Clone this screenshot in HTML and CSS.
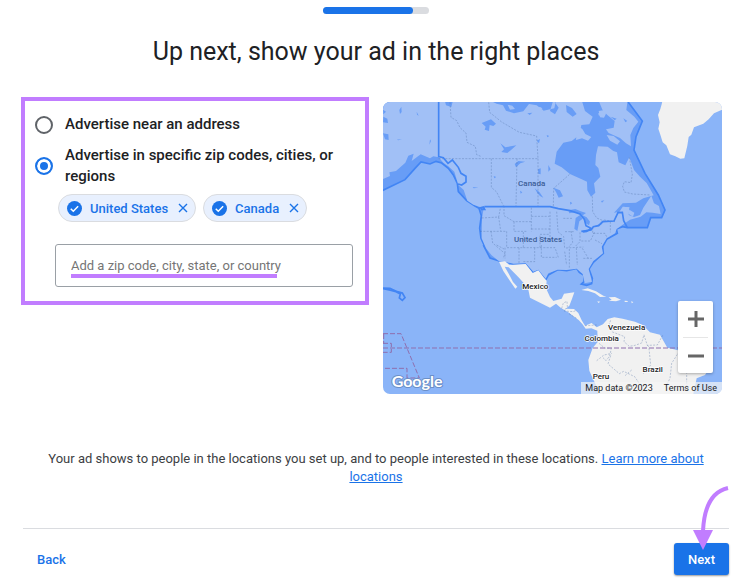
FILE: index.html
```html
<!DOCTYPE html>
<html lang="en">

<head>
    <meta charset="UTF-8">
    <meta name="viewport" content="width=device-width, initial-scale=1.0">
    <title>Choose ad locations</title>
    <link rel="stylesheet" href="styles.css">
</head>

<body>

    <div class="header">
        <div class="progress">
            <div class="progress-bar" style="width: 85%"></div>
        </div>
        <h1>Up next, show your ad in the right places</h1>
    </div>

    <div class="content">
        <form class="location-box">
            <label class="option">
                <input type="radio" name="target" value="address">
                <span>Advertise near an address</span>
            </label>
            <label class="option">
                <input type="radio" name="target" value="regions" checked>
                <span>Advertise in specific zip codes, cities, or regions</span>
            </label>

            <div class="chips">
                <div class="chip">
                    <svg class="check" viewBox="0 0 16 16"><circle cx="8" cy="8" r="8" fill="#1a73e8"/><path d="M4 8.2l2.7 2.7 5.2-5.4" fill="none" stroke="#fff" stroke-width="1.6"/></svg>
                    <span>United States</span>
                    <button type="button" aria-label="Remove United States"><svg viewBox="0 0 10 10"><path d="M1 1l8 8M9 1l-8 8"/></svg></button>
                </div>
                <div class="chip">
                    <svg class="check" viewBox="0 0 16 16"><circle cx="8" cy="8" r="8" fill="#1a73e8"/><path d="M4 8.2l2.7 2.7 5.2-5.4" fill="none" stroke="#fff" stroke-width="1.6"/></svg>
                    <span>Canada</span>
                    <button type="button" aria-label="Remove Canada"><svg viewBox="0 0 10 10"><path d="M1 1l8 8M9 1l-8 8"/></svg></button>
                </div>
            </div>

            <div class="search">
                <input type="text" aria-label="Location" placeholder="Add a zip code, city, state, or country">
                <span class="underline"></span>
            </div>
        </form>

        <div class="map">
            <svg class="map-drawing" viewBox="9 21 1017 876">
                <rect class="sea" x="9" y="21" width="1017" height="876"/>

                <!-- Selected countries, with their waters -->
                <path class="zone" d="M0 290L75 254L105 220L123 201L150 207L168 199L185 204L205 220L220 240L232 265L235 290L260 317L285 333L297 340L304 362L299 400L303 430L318 463L310 450L330 489L358 498L378 500L400 508L437 505L460 532L475 524L490 545L497 555L505 540L533 524L560 527L590 520L598 532L612 541L612 560L604 567L620 571L635 566L637 550L627 522L640 502L670 475L668 455L680 433L712 415L709 402L728 395L742 398L802 398L812 368L845 368L855 345L835 300L795 235L762 165L768 125L787 78L740 15L0 15Z"/>
                <path class="selected" d="M0 15H176V187L160 184L150 190L122 178L95 198L101 176L85 182L76 203L48 228L28 232L30 243L9 252H0Z"/>
                <path class="selected" d="M176 15H605L615 48L638 65L628 88L604 90L598 120L575 138L550 143L530 170L524 206L545 217L570 237L605 253L621 260L622 286L633 305L646 293L642 265L661 245L655 219L646 210L648 180L654 154L683 155L700 168L711 172L716 202L736 211L748 187L762 225L780 245L800 264L821 301L790 310L768 323L728 325L702 353L718 351L728 335L748 337L746 360L762 366L780 360L790 338L814 302L822 325L837 333L842 357L818 353L799 352L782 365L750 374L728 389L710 402L705 415L680 430L665 455L669 475L640 498L626 522L636 560L614 565L608 537L590 521L560 525L533 524L505 535L497 551L475 524L460 530L437 505L400 506L355 497L334 480L318 460L305 430L306 370L311 340L280 329L262 317L251 285L235 270L223 230L205 214L190 203L176 187Z"/>
                <path class="selected" d="M655 15H743L739 45L763 65L775 80L760 99L751 120L753 154L738 145L720 129L686 114L678 103L701 98L704 78L682 60L668 46ZM590 91L607 102L616 117L634 126L624 137L606 130L588 135L590 112ZM656 48L669 46L678 56L672 68L660 67ZM680 120L701 123L720 139L712 149L690 137ZM230 213L247 231L259 249L252 263L239 265L232 248Z"/>

                <!-- Lakes and channels -->
                <path class="inland" d="M305 84L333 73L348 86L340 93L329 90L327 108L314 104L317 95ZM361 145L376 157L409 151L394 164L382 174L364 171L372 163ZM326 15L350 26L369 31L378 47L402 55L430 49L447 27L470 31L491 47L523 40L528 15ZM194 15L218 20L214 36L198 31ZM404 207L415 198L436 200L421 205L408 217ZM464 280L478 291L490 308L480 303L472 294ZM520 278L540 286L549 304L536 308L528 291ZM10 65L22 71L24 84L9 82ZM9 115L25 118L26 135L15 133ZM470 137L480 132L477 145ZM474 223L482 220L482 238L475 236ZM565 346L586 342L602 349L618 354L608 361L585 352L568 355ZM587 369L600 360L608 371L598 379L592 408L583 401ZM606 360L620 367L630 380L627 391L615 383ZM608 408L638 399L629 408L610 413ZM640 395L672 380L663 389L648 393ZM520 15L536 38L525 58L510 48ZM558 30L576 39L590 57L578 65L560 51Z"/>
                <path class="inland" d="M9 44L18 50L10 58ZM58 45L64 35L65 51L60 57ZM110 50L116 62L111 59ZM150 133L153 138L148 149ZM50 134L66 132L55 136ZM278 276L295 278L281 280ZM341 243L349 246L343 250ZM420 287L427 292L422 296ZM500 120L508 123L502 127ZM442 55L457 53L449 60ZM505 210L512 223L505 230ZM570 320L577 324L571 329ZM663 318L673 316L666 323ZM639 240L642 245L636 244ZM692 65L710 71L704 76ZM730 70L742 78L736 82Z"/>
                <path class="selected" d="M383 29L397 32L405 42L390 44ZM465 35L483 37L488 43L476 44ZM570 75L582 83L577 89ZM655 55L664 50L673 55L668 65L656 61ZM748 344L763 353L759 365L745 356ZM730 335L750 338L738 342ZM806 325L812 318L809 330Z"/>

                <!-- State and province lines -->
                <path class="state-line" d="M210 22L213 67L230 77L240 98L258 114L261 142L286 154L290 179L305 185M176 191H474M326 22L329 52L365 81L418 112L470 123L474 191M334 191V277L350 291L370 332M411 191L408 333M474 191V333M520 333L521 280L570 237M305 369L356 366L361 340M356 366L362 407M300 409H377M333 409L338 444L375 476L369 491M372 332V362L402 380H455M454 338V409M402 380V409H440M454 364H508M454 402H510M380 409V458H430V409M430 458H480V418H510M417 458V505M375 458V490M464 458V500H430M480 458H525L535 487M484 450V487H530M510 350V440M530 350L534 410L551 425L554 460M550 370H580M555 410H585M573 408L578 442L566 457M600 412V440L585 455M604 438H631L644 410M638 397V415H675L682 430M645 435L666 446M558 459L610 456M568 462V520M589 459L592 510M607 460L625 490M610 490H640M554 470L560 510M637 304L638 350L650 369L672 378M748 187L757 238L753 263L733 260L728 274L733 291L758 297L810 300M672 375L705 380M691 380V412M350 450L372 462"/>

                <!-- Country borders -->
                <path class="border" d="M176 21V185L190 188L204 205L217 195L235 217L243 235L258 244L258 261L245 270L234 267M313 335H510L535 341L570 347L600 357L613 373L618 392L633 400L620 409L609 410M604 409L633 405L640 395L656 392L668 380L702 378L714 353L727 352L731 377L742 398M296 340L310 336L314 343L303 343M9 579L30 580L52 590L67 594L75 608L67 616L58 609L61 597L48 590L28 585L9 581"/>

                <!-- Greenland, Mexico, Central and South America -->
                <path class="land" d="M848 15H1035V40L1002 55L986 73L970 86L942 97L934 119L926 126L922 152L913 190L901 191L886 184L870 178L859 151L848 142L841 119L835 101L839 82L834 60L841 42L845 28Z"/>
                <path class="land" d="M357 500L375 499L388 510L437 507L458 534L475 526L492 548L500 557L498 580L510 606L520 618L545 611L552 596L583 592L575 614L568 632L557 641L582 642L595 654L605 676L615 692L635 684L650 697L669 688L683 672L703 667L728 671L765 680L788 690L810 712L840 719L862 758L891 765L930 775L972 803L988 820L975 840L950 850L940 897H655L652 880L628 827L625 795L638 759L653 741L652 707L634 700L617 701L607 687L596 675L580 664L567 653L542 638L528 626L510 638L450 608L444 579L417 548L386 517L374 515L391 545L399 561L412 575L406 581L388 555L370 528Z"/>
                <path class="land" d="M604 585L623 580L648 589L670 602L679 605L660 606L645 595L625 588ZM686 607L705 606L723 614L708 619L686 617L695 614ZM652 619L661 620L655 624ZM734 617L744 618L742 621L734 621ZM754 618L760 622L755 625Z"/>
                <path class="state-line" d="M545 640L550 624L561 619L562 635L552 648L579 650L590 646M567 656L590 670M615 692L650 690M692 676L685 694L695 710L734 725L732 740L748 754L765 751L785 744L792 719M792 720L802 751L832 750L848 721M802 751L809 758M657 745L674 759L694 760L689 783L678 797L668 787M650 797L672 780L696 775M692 782L684 807L704 824L718 836L731 829L764 845L781 870L788 892M807 760L812 810L790 836M897 770L875 805L870 850L855 879M920 820V890M755 825L735 842"/>

                <path class="sea-line" d="M9 759H1026M9 716H63L118 849H81V820H9M9 745H34V772H9M11 717V745"/>

                <text class="name picked" x="455" y="273">Canada</text>
                <text class="name picked" x="474" y="440">United States</text>
                <text class="name" x="466" y="581">Mexico</text>
                <text class="name" x="740" y="704">Venezuela</text>
                <text class="name" x="665" y="738">Colombia</text>
                <text class="name" x="818" y="832">Brazil</text>
                <text class="name" x="663" y="851">Peru</text>
                <text class="brand" x="35" y="875">Google</text>
            </svg>

            <div class="zoom">
                <button type="button" aria-label="Zoom in"><svg viewBox="0 0 16 16"><path d="M8 0v16M0 8h16"/></svg></button>
                <button type="button" aria-label="Zoom out"><svg viewBox="0 0 16 16"><path d="M0 8h16"/></svg></button>
            </div>
            <div class="map-terms">
                <span>Map data ©2023</span>
                <a href="#terms">Terms of Use</a>
            </div>
        </div>
    </div>

    <p class="note">Your ad shows to people in the locations you set up, and to people interested in these locations. <a href="#learn">Learn more about locations</a></p>

    <div class="footer">
        <button type="button" class="back">Back</button>
        <div class="next-wrap">
            <button type="button" class="next">Next</button>
            <svg class="arrow" viewBox="0 0 38 66"><path d="M37 3C19 7 13 24 12 46" fill="none" stroke="#c17dff" stroke-width="4"/><path d="M2 45H22L12 65Z" fill="#c17dff"/></svg>
        </div>
    </div>

</body>

</html>
```

FILE: styles.css
```css
* {
    box-sizing: border-box;
}

body {
    font-family: Roboto, Arial, sans-serif;
    margin: 0;
    padding: 7px 21px 8px 23px;
    background-color: #fff;
    color: #202124;
}

button {
    font-family: inherit;
    border: none;
    padding: 0;
    cursor: pointer;
}

/* Header */
.header {
    display: flex;
    flex-direction: column;
    align-items: center;
}

.progress {
    width: 106px;
    height: 7px;
    border-radius: 4px;
    background-color: #dadce0;
}

.progress-bar {
    height: 7px;
    border-radius: 4px;
    background-color: #1a73e8;
}

h1 {
    margin: 21px 0 28px;
    font-size: 25px;
    line-height: 34px;
    font-weight: 400;
}

/* Location form and map */
.content {
    display: grid;
    grid-template-columns: minmax(0, 348fr) minmax(0, 339fr);
    gap: 14px;
    align-items: start;
    margin: 0 7px 0 -2px;
}

.location-box {
    border: 4px solid #c17dff;
    padding: 13px 12px 14px 10px;
}

.option {
    display: flex;
    align-items: center;
    gap: 12px;
    margin-bottom: 10px;
    font-size: 15px;
    line-height: 21px;
    font-weight: 500;
}

.option input {
    appearance: none;
    flex: none;
    width: 18px;
    height: 18px;
    margin: 0;
    border: 2px solid #5f6368;
    border-radius: 50%;
}

.option input:checked {
    border-color: #1a73e8;
    background-color: #1a73e8;
    box-shadow: inset 0 0 0 3px #fff;
}

.chips {
    display: flex;
    gap: 7px;
    margin: -3px 0 22px 23px;
}

.chip {
    display: flex;
    align-items: center;
    height: 28px;
    padding: 0 7px 0 8px;
    border: 1px solid #dadce0;
    border-radius: 14px;
    background-color: #e8f0fe;
    color: #1a73e8;
    font-size: 13px;
    font-weight: 500;
}

.check {
    width: 15px;
    height: 15px;
    margin-right: 8px;
}

.chip button {
    display: flex;
    margin-left: 10px;
    background: none;
}

.chip button svg {
    width: 10px;
    height: 10px;
    fill: none;
    stroke: #1a73e8;
    stroke-width: 1.4;
}

.search {
    position: relative;
    margin-left: 20px;
}

.search input {
    display: block;
    width: 100%;
    height: 43px;
    padding: 0 15px;
    border: 1px solid #9aa0a6;
    border-radius: 3px;
    font-family: inherit;
    font-size: 13px;
}

.search input::placeholder {
    color: #757575;
}

.underline {
    position: absolute;
    left: 16px;
    bottom: 9px;
    width: 206px;
    height: 4px;
    background-color: #c17dff;
}

/* Map */
.map {
    position: relative;
    margin-top: 5px;
    border-radius: 7px;
    overflow: hidden;
}

.map-drawing {
    display: block;
    width: 100%;
}

.sea {
    fill: #8ab4f8;
}

.zone {
    fill: #689df6;
    stroke: #4285f4;
    stroke-width: 5;
}

.selected {
    fill: #a1c0f6;
}

.inland {
    fill: #689df6;
}

.land {
    fill: #f1f1f1;
}

.border {
    fill: none;
    stroke: #4285f4;
    stroke-width: 5;
}

.state-line {
    fill: none;
    stroke: #47699e;
    stroke-opacity: 0.5;
    stroke-width: 2;
    stroke-dasharray: 6 4;
}

.sea-line {
    fill: none;
    stroke: #8f6fae;
    stroke-width: 3;
    stroke-dasharray: 15 6;
}

.name {
    font-size: 24px;
    font-weight: 500;
    text-anchor: middle;
    fill: #202124;
    stroke: #fff;
    stroke-width: 4;
    paint-order: stroke;
}

.picked {
    fill: #3b5d96;
    stroke: none;
}

.brand {
    font-family: Lato, sans-serif;
    font-size: 48px;
    font-weight: 700;
    fill: #fff;
    stroke: #6b8fc8;
    stroke-width: 6;
    paint-order: stroke;
}

.zoom {
    position: absolute;
    right: 9px;
    bottom: 21px;
    width: 35px;
    padding: 0 5px;
    border-radius: 2px;
    background-color: #fff;
    box-shadow: 0 1px 3px rgba(0, 0, 0, 0.3);
}

.zoom button {
    display: flex;
    align-items: center;
    justify-content: center;
    width: 100%;
    height: 36px;
    background: none;
}

.zoom button + button {
    border-top: 1px solid #e6e6e6;
}

.zoom svg {
    width: 16px;
    height: 16px;
    stroke: #666;
    stroke-width: 3;
}

.map-terms {
    position: absolute;
    right: 0;
    bottom: 0;
    display: flex;
    gap: 11px;
    padding: 0 5px 0 4px;
    background-color: rgba(245, 245, 245, 0.7);
    font-size: 9px;
    line-height: 12px;
}

.map-terms a {
    color: #202124;
    text-decoration: none;
}

/* Note */
.note {
    margin: 56px 22px 42px;
    text-align: center;
    font-size: 13px;
    line-height: 18px;
    color: #3c4043;
}

.note a {
    color: #1a73e8;
}

/* Footer */
.footer {
    display: flex;
    align-items: center;
    justify-content: space-between;
    padding: 14px 0 0 14px;
    border-top: 1px solid #dadce0;
}

.back,
.next {
    font-size: 13px;
    font-weight: 500;
}

.back {
    background: none;
    color: #1a73e8;
}

.next-wrap {
    position: relative;
}

.next {
    display: block;
    height: 32px;
    padding: 0 14px;
    border-radius: 3px;
    background-color: #1a73e8;
    color: #fff;
    box-shadow: 0 1px 2px rgba(0, 0, 0, 0.4);
}

.arrow {
    position: absolute;
    right: 0;
    bottom: 24px;
    width: 38px;
    height: 66px;
    pointer-events: none;
}
```
